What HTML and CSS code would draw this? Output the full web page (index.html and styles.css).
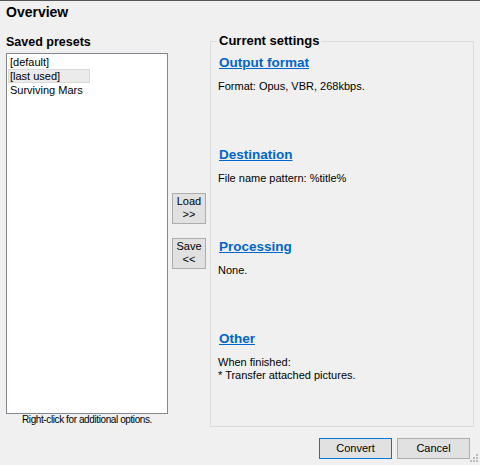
FILE: index.html
```html
<!DOCTYPE html>
<html lang="en">
<head>
    <meta charset="UTF-8">
    <title>Overview</title>
    <link rel="stylesheet" href="styles.css">
</head>
<body>
<div class="dialog">
    <h1 class="title">Overview</h1>

    <div class="main">
        <div class="presets">
            <div class="label">Saved presets</div>
            <ul class="listbox">
                <li>[default]</li>
                <li class="selected">[last used]</li>
                <li>Surviving Mars</li>
            </ul>
            <div class="hint">Right-click for additional options.</div>
        </div>

        <div class="transfer">
            <button class="btn">Load<br>&gt;&gt;</button>
            <button class="btn">Save<br>&lt;&lt;</button>
        </div>

        <fieldset class="settings">
            <legend>Current settings</legend>
            <div class="section">
                <a class="section-link" href="#">Output format</a>
                <p>Format: Opus, VBR, 268kbps.</p>
            </div>
            <div class="section">
                <a class="section-link" href="#">Destination</a>
                <p>File name pattern: %title%</p>
            </div>
            <div class="section">
                <a class="section-link" href="#">Processing</a>
                <p>None.</p>
            </div>
            <div class="section">
                <a class="section-link" href="#">Other</a>
                <p>When finished:<br>* Transfer attached pictures.</p>
            </div>
        </fieldset>
    </div>

    <div class="footer">
        <button class="btn btn-wide btn-default">Convert</button>
        <button class="btn btn-wide">Cancel</button>
    </div>

    <svg class="grip" width="12" height="12" viewBox="0 0 12 12">
        <rect x="8" y="1" width="2" height="2" />
        <rect x="5" y="4" width="2" height="2" />
        <rect x="8" y="4" width="2" height="2" />
        <rect x="2" y="7" width="2" height="2" />
        <rect x="5" y="7" width="2" height="2" />
        <rect x="8" y="7" width="2" height="2" />
    </svg>
</div>
</body>
</html>
```

FILE: styles.css
```css
html, body {
    margin: 0;
    padding: 0;
    background-color: #f0f0f0;
}
body {
    font-family: "Liberation Sans", Arial, sans-serif;
    font-size: 11px;
    color: #000;
}
.dialog { position: relative; height: 464px; border-top: 1px solid #555; }

.title { margin: 0; padding: 3px 0 0 6px; height: 16px; font-size: 14px; line-height: 16px; font-weight: bold; }

.main { display: flex; gap: 4px; margin: 14px 6px 0 6px; height: 393px; }

/* left column: preset list */
.presets { width: 162px; display: flex; flex-direction: column; }
.label { font-size: 12.5px; font-weight: bold; line-height: 16px; margin-bottom: 3px; }
.listbox { list-style: none; margin: 0; padding: 1px; height: 361px; box-sizing: border-box; background: #fff; border: 1px solid #828790; }
.listbox li { height: 14px; line-height: 14px; padding-left: 2px; white-space: nowrap; }
.listbox li.selected { width: 82px; box-sizing: border-box; padding-left: 1px; line-height: 12px; background: #ebebeb; border: 1px solid #dadada; }
.hint { font-size: 10px; line-height: 11px; letter-spacing: -0.4px; text-align: center; }

/* middle column: load / save */
.transfer { width: 34px; display: flex; flex-direction: column; justify-content: center; gap: 14px; }

.btn {
    font-family: inherit;
    font-size: 11px;
    line-height: 13px;
    color: #000;
    background: #e1e1e1;
    border: 1px solid #adadad;
    border-radius: 0;
    padding: 0;
    margin: 0;
}
.transfer .btn { width: 34px; height: 31px; }
.btn-wide { width: 73px; height: 21px; }
.btn-default { border-color: #0078d7; }

/* right column: group box */
.settings { width: 264px; box-sizing: border-box; margin: 0; padding: 7px 8px 0 8px; border: 1px solid #dcdcdc; min-width: 0; }
.settings legend { font-size: 13px; font-weight: bold; line-height: 14px; padding: 0 2px; margin-left: -2px; }
.section { height: 92px; }
.section-link { display: inline-block; font-size: 13.5px; line-height: 16px; font-weight: bold; color: #0066cc; text-decoration: underline; }
.section p { margin: 9px 0 0 -1px; line-height: 13px; }

.footer { display: flex; justify-content: flex-end; gap: 5px; margin: 11px 10px 0 0; }

.grip { position: absolute; right: 0; bottom: 0; fill: #bcbcbc; }
```
